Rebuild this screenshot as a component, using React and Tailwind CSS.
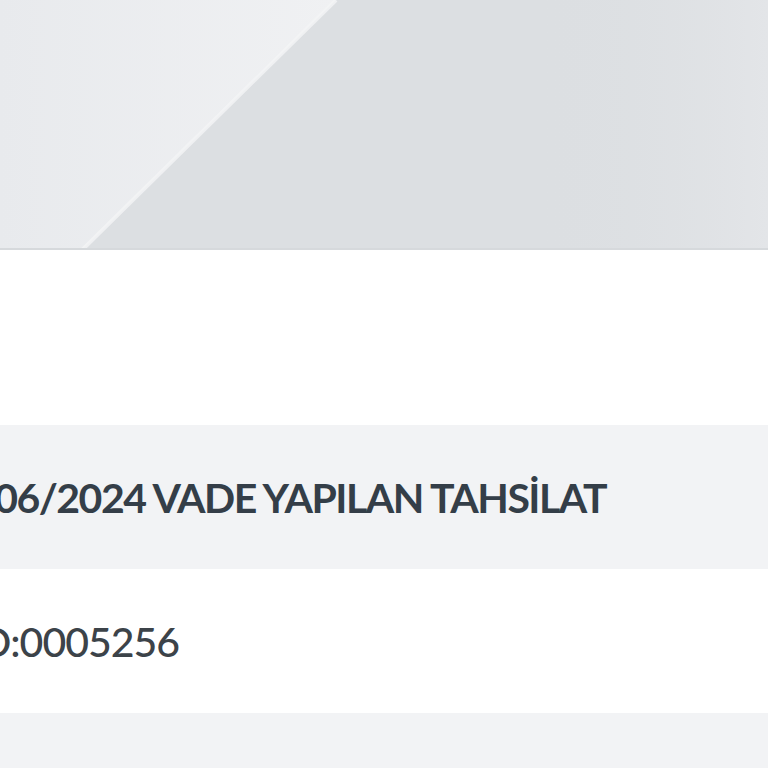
import React from 'react';

const App = () => {
  return (
    <div className="w-[768px] h-[768px] overflow-hidden bg-white" style={{ fontFamily: 'Lato, "Open Sans", sans-serif' }}>
      {/* header banner */}
      <div className="relative h-[250px] overflow-hidden bg-[#dcdfe2] border-b-2 border-[#d6d9dc]">
        <svg className="absolute inset-0" width="768" height="250" viewBox="0 0 768 250">
          <defs>
            <linearGradient id="lite" x1="0" y1="0" x2="1" y2="0">
              <stop offset="0" stopColor="#e8eaed" />
              <stop offset="1" stopColor="#f0f1f3" />
            </linearGradient>
            <linearGradient id="right" x1="0" y1="0" x2="1" y2="0">
              <stop offset="0.7" stopColor="#dcdfe2" stopOpacity="0" />
              <stop offset="1" stopColor="#e3e5e8" stopOpacity="1" />
            </linearGradient>
          </defs>
          <rect x="0" y="0" width="768" height="250" fill="url(#right)" />
          <polygon points="0,0 336,0 82,250 0,250" fill="url(#lite)" />
          <line x1="336" y1="0" x2="82" y2="250" stroke="#f4f5f6" strokeWidth="4" opacity="0.8" />
        </svg>
      </div>

      <div className="h-[175px] bg-white" />

      <div className="h-[144px] bg-[#f2f3f5] flex items-center">
        <span className="ml-[-68px] whitespace-nowrap text-[41px] tracking-[-1.5px] font-bold text-[#343e48] leading-none">
          30/06/2024 VADE YAPILAN TAHSİLAT
        </span>
      </div>

      <div className="h-[144px] bg-white flex items-center">
        <span className="ml-[-52px] whitespace-nowrap text-[41px] tracking-[-1px] font-medium text-[#3c4349] leading-none">
          NO:0005256
        </span>
      </div>

      <div className="h-[56px] bg-[#f2f3f5]" />
    </div>
  );
};

export default App;
